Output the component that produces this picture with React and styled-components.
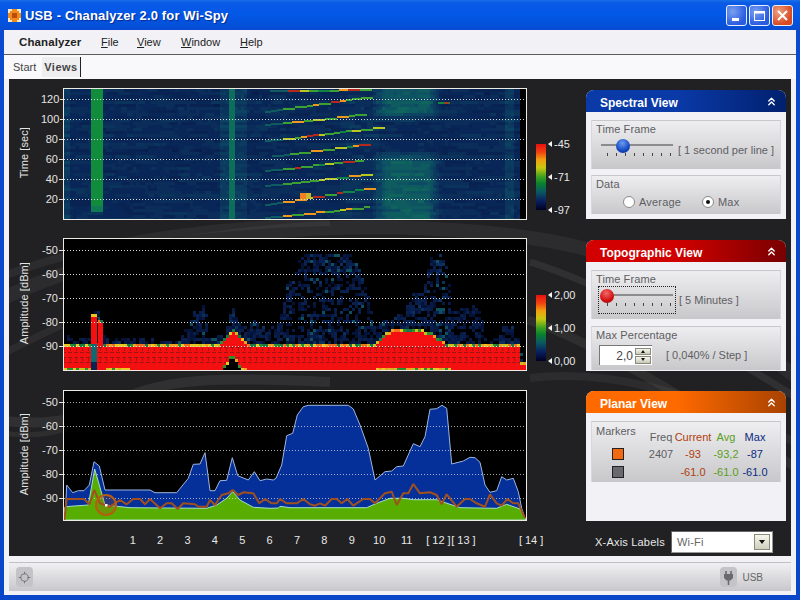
import React from 'react';
import styled, { createGlobalStyle } from 'styled-components';
import { ChevronsUp, Locate } from 'lucide-react';

const GlobalStyle = createGlobalStyle`
  html, body { margin: 0; padding: 0; width: 800px; height: 600px; overflow: hidden; background: #0a4ad0; }
  body { font-family: "Liberation Sans", Arial, sans-serif; font-size: 11px; }
  * { box-sizing: border-box; }
`;

// window frame
const Window = styled.div`
  width: 800px;
  height: 600px;
  display: flex;
  flex-direction: column;
  padding: 0 4px 5px;
  background: linear-gradient(180deg, #1a6fe8 0, #0a5ae6 3px, #0358e8 14px, #0450d8 26px, #0a4ad0 30px, #0a46c8 100%);
`;

const TitleBar = styled.div`
  height: 30px;
  flex: none;
  display: flex;
  align-items: center;
  padding: 0 3px 0 4px;
`;

const TitleText = styled.div`
  margin-left: 4px;
  color: #fff;
  font-size: 13px;
  font-weight: 700;
  letter-spacing: 0.15px;
  text-shadow: 1px 1px 1px #0a2a90;
  flex: 1;
`;

const CaptionButton = styled.div`
  width: 21px;
  height: 21px;
  margin-left: 2px;
  border: 1px solid #e8eefc;
  border-radius: 3px;
  display: flex;
  align-items: center;
  justify-content: center;
  background: ${(p) =>
    p.$close
      ? 'radial-gradient(circle at 30% 30%, #f0a080, #d84a22 70%)'
      : 'radial-gradient(circle at 30% 30%, #7aa0f0, #2a5ce0 70%)'};
`;

const Content = styled.div`
  flex: 1;
  display: flex;
  flex-direction: column;
  background: #f2f2f6;
`;

const MenuBar = styled.div`
  height: 25px;
  flex: none;
  display: flex;
  align-items: center;
  padding-left: 15px;
  border-bottom: 1px solid #5c5c5c;
  color: #222;
`;

const MenuBrand = styled.span`
  font-size: 11.5px;
  font-weight: 700;
  width: 82px;
  letter-spacing: 0.1px;
`;

const MenuItem = styled.span`
  font-size: 11px;
  width: ${(p) => p.$w}px;
`;

const TabBar = styled.div`
  height: 24px;
  flex: none;
  display: flex;
  align-items: center;
  padding-left: 7px;
  background: #f9f9fb;
  color: #444;
`;

const Tab = styled.div`
  height: 20px;
  display: flex;
  align-items: center;
  padding: 0 2px;
  font-size: 11px;
  font-weight: ${(p) => (p.$active ? 700 : 400)};
  letter-spacing: ${(p) => (p.$active ? '0.5px' : '0')};
  margin-left: ${(p) => (p.$active ? '4px' : '0')};
  background: ${(p) => (p.$active ? '#eeeef0' : 'transparent')};
  border-right: ${(p) => (p.$active ? '1px solid #222' : '0')};
`;

const Main = styled.div`
  position: relative;
  height: 477px;
  flex: none;
  margin: 0 5px;
  display: flex;
  overflow: hidden;
  background: #212123;
`;

const Swooshes = styled.svg`
  position: absolute;
  left: 0;
  top: 0;
`;

const ChartColumn = styled.div`
  position: relative;
  width: 577px;
  flex: none;
  padding-top: 9px;
  display: flex;
  flex-direction: column;
`;

const ChartRow = styled.div`
  display: flex;
  height: ${(p) => p.$h}px;
  margin-bottom: ${(p) => p.$gap}px;
  flex: none;
`;

const AxisTitle = styled.div`
  width: 32px;
  flex: none;
  display: flex;
  align-items: center;
  justify-content: flex-start;
  padding: 0 0 3px 9px;
  color: #e4e4e4;
  font-size: 11px;
  letter-spacing: 0.1px;
  span {
    writing-mode: vertical-rl;
    transform: rotate(180deg);
    white-space: nowrap;
    line-height: 13px;
  }
`;

const YAxis = styled.div`
  width: 22px;
  flex: none;
  display: flex;
  flex-direction: column;
  padding-top: ${(p) => p.$top}px;
`;

const YTick = styled.div`
  height: ${(p) => p.$h}px;
  display: flex;
  align-items: center;
  justify-content: flex-end;
  color: #e4e4e4;
  font-size: 11px;
  white-space: nowrap;
  &::after {
    content: '';
    width: 4px;
    height: 1px;
    margin-left: 1px;
    background: #e4e4e4;
  }
`;

const Plot = styled.div`
  width: 464px;
  flex: none;
  border: 1px solid #ecece4;
  background: #000;
  svg { display: block; }
`;

const Legend = styled.div`
  display: flex;
  margin: ${(p) => p.$top}px 0 0 9px;
  height: 66px;
`;

const LegendBar = styled.div`
  width: 10px;
  background: linear-gradient(180deg, #e81010 0, #f04010 12%, #f0a010 24%, #c8c810 36%, #3aa020 50%, #0a8030 60%, #0a5a60 72%, #0a2060 86%, #000020 100%);
`;

const LegendScale = styled.div`
  display: flex;
  flex-direction: column;
  justify-content: space-between;
  margin: -7px 0 -7px 2px;
`;

const LegendLabel = styled.div`
  height: 14px;
  display: flex;
  align-items: center;
  color: #e8e8e8;
  font-size: 11px;
  &::before {
    content: '';
    width: 0;
    height: 0;
    margin-right: 2px;
    border-style: solid;
    border-width: 3px 4px 3px 0;
    border-color: transparent #f4f4f4 transparent transparent;
  }
`;

const XAxis = styled.div`
  display: flex;
  align-items: center;
  height: 12px;
  margin-top: 13px;
  padding-left: 110px;
  color: #e8e8e8;
  font-size: 11px;
`;

const XTick = styled.span`
  width: ${(p) => p.$w}px;
  margin-left: ${(p) => p.$ml || 0}px;
  flex: none;
  text-align: center;
  white-space: nowrap;
`;

// right hand side
const SideColumn = styled.div`
  position: relative;
  width: 200px;
  flex: none;
  padding-top: 11px;
  display: flex;
  flex-direction: column;
`;

const Panel = styled.section`
  height: ${(p) => p.$h}px;
  margin-bottom: ${(p) => p.$gap}px;
  flex: none;
  background: #f2f2f6;
  border-radius: 8px 8px 0 0;
  display: flex;
  flex-direction: column;
`;

const PanelHeader = styled.header`
  height: 22px;
  flex: none;
  display: flex;
  align-items: center;
  justify-content: space-between;
  padding: 4px 8px 0 14px;
  border-radius: 8px 8px 0 0;
  color: #fff;
  font-size: 12px;
  font-weight: 700;
  background: linear-gradient(90deg, ${(p) => p.$from}, ${(p) => p.$from} 45%, ${(p) => p.$to});
  svg { margin-top: -4px; }
`;

const Group = styled.div`
  height: ${(p) => p.$h}px;
  margin: ${(p) => p.$top}px 5px 0;
  flex: none;
  border-top: 1px solid #c8c8ca;
  border-left: 1px solid #d8d8da;
  border-right: 1px solid #d8d8da;
  background: linear-gradient(180deg, #eeeef0, #c8c8cb);
  color: #5e5e62;
`;

const GroupLabel = styled.div`
  padding: 2px 0 0 4px;
  font-size: 11px;
  line-height: 13px;
  letter-spacing: 0.1px;
`;

const SliderRow = styled.div`
  display: flex;
  align-items: center;
  gap: ${(p) => p.$gap}px;
  margin: 3px 0 0 ${(p) => p.$left}px;
  font-size: 11px;
  white-space: nowrap;
`;

const Slider = styled.div`
  position: relative;
  width: 72px;
  height: 22px;
  flex: none;
  outline: ${(p) => (p.$focus ? '1px dotted #222' : '0')};
  outline-offset: ${(p) => (p.$focus ? '2px' : '0')};
  &::before {
    content: '';
    position: absolute;
    left: 0;
    right: 0;
    top: 5px;
    height: 2px;
    background: #8c8c8e;
  }
`;

const SliderTicks = styled.div`
  position: absolute;
  left: 6px;
  right: 2px;
  top: 14px;
  display: flex;
  justify-content: space-between;
  i {
    width: 1px;
    height: 3px;
    background: #444;
  }
`;

const SliderThumb = styled.div`
  position: absolute;
  left: ${(p) => p.$pos}px;
  top: 0;
  width: 14px;
  height: 14px;
  border-radius: 50%;
  background: radial-gradient(circle at 45% 30%, ${(p) => p.$light}, ${(p) => p.$color} 60%, ${(p) => p.$dark});
`;

const RadioRow = styled.div`
  display: flex;
  align-items: center;
  margin: 5px 0 0 31px;
  font-size: 11px;
  letter-spacing: 0.2px;
`;

const RadioDot = styled.span`
  position: relative;
  width: 12px;
  height: 12px;
  border-radius: 50%;
  border: 1px solid #8a8a8a;
  background: #fff;
  margin-right: 4px;
  flex: none;
  &::after {
    content: '';
    display: ${(p) => (p.$on ? 'block' : 'none')};
    position: absolute;
    left: 3px;
    top: 3px;
    width: 4px;
    height: 4px;
    border-radius: 50%;
    background: #111;
  }
`;

const RadioText = styled.span`
  width: ${(p) => p.$w}px;
`;

const SpinRow = styled.div`
  display: flex;
  align-items: center;
  margin: 3px 0 0 7px;
  font-size: 11px;
`;

const Spinner = styled.div`
  width: 53px;
  height: 20px;
  display: flex;
  align-items: center;
  justify-content: space-between;
  margin-right: 14px;
  padding: 1px;
  background: #fff;
  border-top: 1px solid #777;
  border-left: 1px solid #777;
  color: #444;
  font-size: 12px;
`;

const SpinValue = styled.span`
  flex: 1;
  text-align: right;
  padding-right: 2px;
`;

const SpinButtons = styled.div`
  display: flex;
  flex-direction: column;
  width: 16px;
  height: 16px;
  gap: 1px;
`;

const SpinButton = styled.div`
  flex: 1;
  display: flex;
  align-items: center;
  justify-content: center;
  background: linear-gradient(180deg, #f6f6ee, #c8c8b8);
  border: 1px solid #8a8a78;
  &::after {
    content: '';
    border-style: solid;
    border-width: ${(p) => (p.$up ? '0 2.5px 3px' : '3px 2.5px 0')};
    border-color: ${(p) =>
      p.$up
        ? 'transparent transparent #111 transparent'
        : '#111 transparent transparent transparent'};
  }
`;

const MarkerGrid = styled.div`
  display: grid;
  grid-template-columns: 57px 24px 40px 26px 32px;
  grid-auto-rows: 17.5px;
  padding-top: 6px;
  font-size: 11px;
  align-items: center;
  justify-items: center;
`;

const MarkerTitle = styled.div`
  justify-self: start;
  align-self: start;
  padding-left: 4px;
  margin-top: -3px;
  white-space: nowrap;
`;

const Cell = styled.div`
  color: ${(p) => p.$color || '#5e5e62'};
  white-space: nowrap;
`;

const Swatch = styled.div`
  width: 12px;
  height: 12px;
  margin-left: -6px;
  border: 1px solid #222;
  background: ${(p) => p.$color};
`;

const AxisPicker = styled.div`
  display: flex;
  align-items: center;
  height: 22px;
  padding-left: 9px;
  color: #e8e8e8;
  font-size: 11px;
  letter-spacing: 0.2px;
`;

const PickerLabel = styled.span`
  width: 76px;
`;

const Picker = styled.div`
  width: 102px;
  height: 22px;
  display: flex;
  align-items: center;
  justify-content: space-between;
  padding: 0 2px 0 5px;
  background: #fff;
  border: 1px solid #999;
  border-top-color: #666;
  border-left-color: #666;
  color: #666;
  font-size: 11px;
`;

const PickerArrow = styled.div`
  width: 16px;
  height: 16px;
  display: flex;
  align-items: center;
  justify-content: center;
  background: linear-gradient(180deg, #f6f6ea, #cfcfc0);
  border: 1px solid #8a8a78;
  &::after {
    content: '';
    border-style: solid;
    border-width: 4px 3.5px 0;
    border-color: #111 transparent transparent transparent;
  }
`;

const StatusBar = styled.div`
  height: 29px;
  flex: none;
  margin: 6px 5px 0;
  display: flex;
  align-items: center;
  justify-content: space-between;
  padding: 0 28px 0 7px;
  border-top: 1px solid #c0c0c2;
  background: linear-gradient(180deg, #f0f0f2, #c8c8cc);
  color: #666;
  font-size: 10px;
`;

const StatusIcon = styled.div`
  width: 17px;
  height: 20px;
  display: flex;
  align-items: center;
  justify-content: center;
  border-radius: 4px;
  background: #c4c4c8;
  color: #666;
`;

const StatusRight = styled.div`
  display: flex;
  align-items: center;
  gap: 5px;
`;

// helpers for the drawn data
const rng = (seed) => () => {
  seed = (seed + 0x6d2b79f5) | 0;
  let t = Math.imul(seed ^ (seed >>> 15), 1 | seed);
  t = (t + Math.imul(t ^ (t >>> 7), 61 | t)) ^ t;
  return ((t ^ (t >>> 14)) >>> 0) / 4294967296;
};

const interp = (pts, x) => {
  if (x <= pts[0][0]) return pts[0][1];
  for (let i = 1; i < pts.length; i++) {
    if (x <= pts[i][0]) {
      const [x0, y0] = pts[i - 1];
      const [x1, y1] = pts[i];
      return y0 + ((y1 - y0) * (x - x0)) / (x1 - x0 || 1);
    }
  }
  return pts[pts.length - 1][1];
};

const STOPS = [
  [0, [0, 0, 30]],
  [0.2, [9, 38, 88]],
  [0.3, [13, 74, 100]],
  [0.4, [16, 118, 90]],
  [0.5, [16, 140, 60]],
  [0.62, [150, 200, 30]],
  [0.72, [232, 200, 30]],
  [0.84, [240, 128, 30]],
  [1, [180, 40, 30]],
];

const heat = (t) => {
  const v = Math.max(0, Math.min(1, Math.round(t * 50) / 50));
  for (let i = 1; i < STOPS.length; i++) {
    if (v <= STOPS[i][0]) {
      const [a, ca] = STOPS[i - 1];
      const [b, cb] = STOPS[i];
      const k = (v - a) / (b - a);
      return `rgb(${ca.map((c, n) => Math.round(c + (cb[n] - c) * k)).join(',')})`;
    }
  }
  return 'rgb(180,40,30)';
};

const SWEEPS = [
  [283, 215, 367, 206],
  [283, 201, 367, 187],
  [283, 183, 367, 173],
  [283, 168, 360, 159],
  [290, 153, 367, 143],
  [283, 138, 375, 127],
  [283, 122, 367, 113],
  [283, 108, 367, 96],
  [288, 90, 372, 89],
];

const buildSpectrogram = () => {
  const r = rng(11);
  const rects = [];
  for (let j = 0; j < 44; j++) {
    const y = 89 + j * 3;
    const bias = (r() - 0.5) * 0.025;
    let run = null;
    let wobble = r() * 0.05;
    for (let i = 0; i < 154; i++) {
      const x = 64 + i * 3;
      if (r() < 0.35) wobble = r() * 0.05;
      let t = 0.18 + bias + wobble;
      if (x < 70) t += 0.05;
      if (x >= 91 && x < 101) t = y < 205 ? 0.49 + r() * 0.02 : y < 211 ? 0.41 : t;
      if (x >= 218 && x < 245) t += 0.05;
      if (x >= 229 && x < 235) t = 0.37 + r() * 0.02;
      if (x >= 340 && x < 377) t += 0.02;
      if (x >= 370 && x < 440 && (y < 120 || y > 148)) {
        const fx = Math.min((x - 370) / 14, (440 - x) / 14, 1);
        const fy = y < 120 ? Math.min((120 - y) / 9, 1) : Math.min((y - 148) / 12, 1);
        t += 0.13 * fx * fy;
      }
      if (x >= 505 && x < 512) t += 0.05;
      const c = x >= 520 ? '#000' : heat(t);
      if (run && run.c === c) run.w += 3;
      else {
        run = { x, y, w: 3, h: 3, c };
        rects.push(run);
      }
    }
  }
  SWEEPS.forEach(([x0, y0, x1, y1]) => {
    const slope = (y1 - y0) / (x1 - x0);
    // dim tail in front of every sweep
    for (let x = x0 - 18; x < x0; x += 6) {
      rects.push({ x, y: Math.round(y0 + slope * (x - x0)), w: 6, h: 2, c: heat(0.34) });
    }
    for (let x = x0; x < x1; ) {
      const w = 6 + Math.floor(r() * 3) * 3;
      const y = Math.round(y0 + slope * (x - x0));
      const pick = r();
      const t = pick < 0.4 ? 0.54 : pick < 0.6 ? 0.66 : pick < 0.78 ? 0.8 : pick < 0.88 ? 1 : 0.46;
      rects.push({ x, y, w, h: 2, c: heat(t) });
      x += w;
    }
  });
  rects.push({ x: 300, y: 193, w: 6, h: 6, c: '#f08020' });
  rects.push({ x: 306, y: 193, w: 5, h: 6, c: '#c8b830' });
  rects.push({ x: 438, y: 102, w: 12, h: 2, c: '#0f8a3c' });
  rects.push({ x: 444, y: 102, w: 5, h: 2, c: '#a04020' });
  return rects;
};

const z8 = (pts) => pts.map(([x, y]) => [10 + x / 3, 385 + y / 3]);
const z9 = (pts) => pts.map(([x, y]) => [270 + x / 3, 385 + y / 3]);

const MAX_CURVE = [
  [63.5, 520],
  ...z8([[165, 405], [170, 300], [178, 310], [188, 323], [205, 317], [222, 317], [238, 300], [252, 230], [268, 243], [285, 315], [420, 315], [435, 323], [500, 323], [535, 280], [550, 238], [570, 237], [585, 203], [600, 317], [615, 317], [630, 287], [650, 286], [667, 218], [683, 272], [715, 285], [733, 260], [750, 287], [770, 282], [790, 285]]),
  ...z9([[18, 280], [35, 240], [50, 152], [68, 145], [82, 90], [100, 65], [115, 61], [235, 61], [250, 72], [270, 120], [295, 190], [315, 285], [345, 260], [365, 258], [380, 245], [400, 243], [430, 176], [450, 185], [465, 155], [480, 73], [500, 71], [516, 61], [530, 70], [545, 237], [580, 228], [600, 217], [615, 218], [630, 232], [645, 300], [660, 322], [680, 317], [695, 275], [710, 285], [730, 280], [745, 320], [755, 370], [767, 405]]),
];

const AVG_CURVE = [
  [63.5, 520],
  ...z8([[165, 365], [235, 360], [254, 252], [285, 360], [360, 368], [590, 370], [620, 360], [650, 340], [668, 320], [690, 345], [730, 367], [780, 370], [805, 369]]),
  ...z9([[30, 364], [60, 368], [290, 368], [320, 355], [360, 340], [400, 340], [430, 344], [500, 344], [540, 358], [570, 368], [680, 370], [710, 358], [750, 372], [767, 405]]),
];

const CUR_CURVE = [
  ...z8([[163, 405], [170, 342], [222, 342], [238, 358], [253, 315], [270, 355], [300, 365], [330, 345], [350, 358], [370, 342], [390, 342], [405, 358], [420, 342], [450, 370], [470, 355], [485, 355], [503, 372], [520, 355], [555, 358], [565, 365], [590, 365], [600, 345], [615, 360], [635, 330], [655, 325], [668, 315], [685, 330], [700, 322], [730, 325], [748, 355], [765, 342], [785, 355], [800, 355]]),
  ...z9([[30, 342], [50, 355], [80, 355], [100, 342], [120, 358], [135, 362], [150, 355], [165, 362], [185, 342], [200, 342], [215, 355], [232, 342], [250, 362], [280, 342], [300, 342], [315, 355], [345, 325], [365, 320], [380, 360], [400, 325], [415, 325], [430, 297], [450, 325], [480, 322], [500, 330], [515, 358], [530, 328], [560, 365], [585, 342], [600, 342], [620, 355], [645, 365], [660, 328], [680, 355], [695, 362], [712, 342], [730, 355], [745, 355], [765, 400]]),
];

const RED_TOP = [[64, 344], [218, 344], [224, 338], [232, 328], [240, 333], [248, 342], [252, 344], [373, 344], [378, 338], [385, 330], [395, 328], [420, 328], [430, 331], [440, 338], [450, 344], [520, 344]];
const TOP_COLORS = ['#e8c820', '#f0a020', '#2a9030', '#c8c020', '#f07020', '#1a7a40'];
const NOISE = ['#051237', '#071945', '#09204e', '#0b305c', '#0e5060'];
const WARM_BOTTOM = [[64, 91], [106, 130], [222, 245], [375, 450]];

const buildDensity = () => {
  const r = rng(23);
  const rects = [];
  for (let i = 0; i < 154; i++) {
    const x = 64 + i * 3;
    const maxY = interp(MAX_CURVE, x + 1) - 152;
    let top = interp(RED_TOP, x + 1);
    let bottom = 369;
    if (x === 91 || x === 94) {
      top = 313;
      bottom = 343;
    }
    if (x === 97 || x === 100) top = 318;
    if (x >= 520) top = 361;
    const notch = 352 + Math.abs(x + 1 - 232) * 1.6;
    const warm = WARM_BOTTOM.some(([a, b]) => x >= a && x < b);
    for (let y = 239; y < 369; y += 3) {
      if (y < top) {
        if (y < maxY - 2) continue;
        const nearEdge = y - maxY < 18;
        const nearRed = top - y < 14;
        const p = nearEdge || nearRed ? 0.68 : 0.4;
        if (r() > p) continue;
        const tower = x >= 436 && x <= 444;
        let n = Math.floor(r() * 3);
        if (r() < (tower ? 0.5 : 0.08)) n = 3 + Math.floor(r() * 2);
        rects.push({ x, y, w: 3, h: 3, c: NOISE[n] });
      } else if (y >= bottom) {
        rects.push({ x, y, w: 3, h: 3, c: y < 360 ? '#0e6a70' : '#0a2452' });
      } else if (y < notch) {
        let c = '#f41010';
        if (y < top + 3) c = TOP_COLORS[Math.floor(r() * TOP_COLORS.length)];
        if (y >= 366 && warm) c = TOP_COLORS[Math.floor(r() * 4)];
        rects.push({ x, y, w: 3, h: 3, c });
      } else if (y < notch + 3) {
        rects.push({ x, y, w: 3, h: 3, c: TOP_COLORS[Math.floor(r() * 3)] });
      } else {
        rects.push({ x, y, w: 3, h: 3, c: '#000' });
      }
    }
    // the dark cell lines inside the red area
    if (bottom === 369 && x < 520) {
      for (let y = 347; y < 366; y += 5) {
        if (y > top + 3 && y < notch) rects.push({ x: x + (i % 2), y, w: 2, h: 1, c: '#9c1414' });
      }
      if (i % 2 === 0) {
        for (let y = 348; y < 366; y += 10) {
          if (y > top + 3 && y < notch) rects.push({ x, y, w: 1, h: 3, c: '#a81414' });
        }
      }
    }
  }
  rects.push({ x: 97, y: 318, w: 1, h: 25, c: '#1a0505' });
  return rects;
};

const toPoints = (pts) => pts.map(([x, y]) => `${x.toFixed(1)},${y.toFixed(1)}`).join(' ');

const Cells = ({ rects }) =>
  rects.map((d, i) => <rect key={i} x={d.x} y={d.y} width={d.w} height={d.h} fill={d.c} />);

const GridLines = ({ ys, x1 = 64, x2 = 526, opacity = 1 }) =>
  ys.map((y) => (
    <line key={y} x1={x1} x2={x2} y1={y + 0.5} y2={y + 0.5} stroke="#dcdcdc" strokeDasharray="1 2" opacity={opacity} />
  ));

const spectrogram = buildSpectrogram();
const density = buildDensity();

const Spectrogram = () => (
  <svg width="462" height="130" viewBox="64 89 462 130" shapeRendering="crispEdges">
    <Cells rects={spectrogram} />
    <GridLines ys={[99, 119, 139, 159, 179, 199]} />
  </svg>
);

const Topographic = () => (
  <svg width="462" height="131" viewBox="64 239 462 131" shapeRendering="crispEdges">
    <Cells rects={density} />
    <GridLines ys={[250, 274, 298, 322, 346]} />
  </svg>
);

const Planar = () => (
  <svg width="462" height="129" viewBox="64 391 462 129">
    <polygon points={toPoints(MAX_CURVE)} fill="#05309a" stroke="#9db6e0" />
    <polygon points={toPoints(AVG_CURVE)} fill="#58ae00" stroke="#a8dcc8" />
    <g shapeRendering="crispEdges">
      <GridLines ys={[402, 426, 450, 474, 498]} opacity={0.75} />
    </g>
    <polyline points={toPoints(CUR_CURVE)} fill="none" stroke="#a0501e" strokeWidth="2" strokeLinejoin="bevel" />
    <circle cx="106" cy="505" r="10" fill="#a0501e" fillOpacity="0.25" stroke="#b85c12" strokeWidth="2" />
    <rect x="105" y="504" width="2.5" height="2.5" fill="#fff" />
  </svg>
);

const TitleIcon = () => (
  <svg width="13" height="13" viewBox="0 0 13 13">
    <rect width="13" height="13" rx="1.5" fill="#f08a1c" />
    <path d="M0 0h4v2H2v2H0zM9 0h4v4h-2V2H9zM0 9h2v2h2v2H0zM11 9h2v4H9v-2h2z" fill="#fbe9c8" />
    <rect x="4" y="4" width="5" height="5" fill="#b84c08" />
  </svg>
);

const PlugIcon = () => (
  <svg width="11" height="15" viewBox="0 0 11 15">
    <path d="M3 1v3M8 1v3" stroke="#6a6a6e" strokeWidth="1.6" fill="none" />
    <path d="M1 4h9v4l-2.5 2.5h-4L1 8z" fill="#6a6a6e" />
    <path d="M5.5 10v5" stroke="#6a6a6e" strokeWidth="1.6" />
  </svg>
);

const Background = () => (
  <Swooshes width="782" height="477" viewBox="9 79 782 477" fill="none">
    <path d="M-20 310C100 245 290 215 480 232S690 300 820 395" stroke="#fff" strokeOpacity="0.05" strokeWidth="14" />
    <path d="M-20 285C90 240 200 225 330 222" stroke="#fff" strokeOpacity="0.05" strokeWidth="8" />
    <path d="M530 262C590 280 690 330 800 400" stroke="#fff" strokeOpacity="0.07" strokeWidth="7" />
    <path d="M528 320C590 340 690 400 800 470" stroke="#fff" strokeOpacity="0.06" strokeWidth="9" />
    <path d="M-10 420C40 425 70 425 120 400S240 378 330 382" stroke="#fff" strokeOpacity="0.07" strokeWidth="10" />
    <path d="M-10 432C20 436 40 436 62 430" stroke="#fff" strokeOpacity="0.06" strokeWidth="5" />
    <path d="M530 378C600 370 680 385 800 445" stroke="#fff" strokeOpacity="0.05" strokeWidth="8" />
    <path d="M-10 360C20 345 40 335 62 325" stroke="#fff" strokeOpacity="0.05" strokeWidth="7" />
  </Swooshes>
);

const Ticks = () => (
  <SliderTicks>
    {Array.from({ length: 8 }, (_, i) => (
      <i key={i} />
    ))}
  </SliderTicks>
);

const Y_TIME = ['120', '100', '80', '60', '40', '20'];
const Y_DBM = ['-50', '-60', '-70', '-80', '-90'];
const X_TICKS = ['1', '2', '3', '4', '5', '6', '7', '8', '9', '10', '11'];

const App = () => {
  return (
    <>
      <GlobalStyle />
      <Window>
        <TitleBar>
          <TitleIcon />
          <TitleText>USB - Chanalyzer 2.0 for Wi-Spy</TitleText>
          <CaptionButton>
            <svg width="13" height="13" viewBox="0 0 13 13"><rect x="2" y="9" width="7" height="3" fill="#fff" /></svg>
          </CaptionButton>
          <CaptionButton>
            <svg width="13" height="13" viewBox="0 0 13 13"><rect x="1.5" y="2.5" width="10" height="9" fill="none" stroke="#fff" /><rect x="1" y="2" width="11" height="2.5" fill="#fff" /></svg>
          </CaptionButton>
          <CaptionButton $close>
            <svg width="13" height="13" viewBox="0 0 13 13"><path d="M2 2l9 9M11 2l-9 9" stroke="#fff" strokeWidth="2" /></svg>
          </CaptionButton>
        </TitleBar>

        <Content>
          <MenuBar>
            <MenuBrand>Chanalyzer</MenuBrand>
            <MenuItem $w={36}><u>F</u>ile</MenuItem>
            <MenuItem $w={44}><u>V</u>iew</MenuItem>
            <MenuItem $w={59}><u>W</u>indow</MenuItem>
            <MenuItem $w={30}><u>H</u>elp</MenuItem>
          </MenuBar>
          <TabBar>
            <Tab>Start</Tab>
            <Tab $active>Views</Tab>
          </TabBar>

          <Main>
            <Background />
            <ChartColumn>
              <ChartRow $h={132} $gap={18}>
                <AxisTitle><span>Time [sec]</span></AxisTitle>
                <YAxis $top={1}>
                  {Y_TIME.map((t) => <YTick key={t} $h={20}>{t}</YTick>)}
                </YAxis>
                <Plot><Spectrogram /></Plot>
                <Legend $top={56}>
                  <LegendBar />
                  <LegendScale>
                    <LegendLabel>-45</LegendLabel>
                    <LegendLabel>-71</LegendLabel>
                    <LegendLabel>-97</LegendLabel>
                  </LegendScale>
                </Legend>
              </ChartRow>
              <ChartRow $h={133} $gap={19}>
                <AxisTitle><span>Amplitude [dBm]</span></AxisTitle>
                <YAxis $top={0}>
                  {Y_DBM.map((t) => <YTick key={t} $h={24}>{t}</YTick>)}
                </YAxis>
                <Plot><Topographic /></Plot>
                <Legend $top={57}>
                  <LegendBar />
                  <LegendScale>
                    <LegendLabel>2,00</LegendLabel>
                    <LegendLabel>1,00</LegendLabel>
                    <LegendLabel>0,00</LegendLabel>
                  </LegendScale>
                </Legend>
              </ChartRow>
              <ChartRow $h={131} $gap={0}>
                <AxisTitle><span>Amplitude [dBm]</span></AxisTitle>
                <YAxis $top={0}>
                  {Y_DBM.map((t) => <YTick key={t} $h={24}>{t}</YTick>)}
                </YAxis>
                <Plot><Planar /></Plot>
              </ChartRow>
              <XAxis>
                {X_TICKS.map((t) => <XTick key={t} $w={27.4}>{t}</XTick>)}
                <XTick $w={25} $ml={5.6}>[ 12 ]</XTick>
                <XTick $w={25}>[ 13 ]</XTick>
                <XTick $w={24} $ml={43}>[ 14 ]</XTick>
              </XAxis>
            </ChartColumn>

            <SideColumn>
              <Panel $h={129} $gap={21}>
                <PanelHeader $from="#0a3aa8" $to="#01206e">
                  Spectral View
                  <ChevronsUp size={13} strokeWidth={2.5} />
                </PanelHeader>
                <Group $h={49} $top={8}>
                  <GroupLabel>Time Frame</GroupLabel>
                  <SliderRow $left={9} $gap={5}>
                    <Slider>
                      <Ticks />
                      <SliderThumb $pos={15} $light="#6a9cf0" $color="#1448c0" $dark="#0a2a80" />
                    </Slider>
                    [ 1 second per line ]
                  </SliderRow>
                </Group>
                <Group $h={39} $top={6}>
                  <GroupLabel>Data</GroupLabel>
                  <RadioRow>
                    <RadioDot />
                    <RadioText $w={63}>Average</RadioText>
                    <RadioDot $on />
                    <RadioText $w={24}>Max</RadioText>
                  </RadioRow>
                </Group>
              </Panel>

              <Panel $h={131} $gap={20}>
                <PanelHeader $from="#d20000" $to="#780000">
                  Topographic View
                  <ChevronsUp size={13} strokeWidth={2.5} />
                </PanelHeader>
                <Group $h={49} $top={8}>
                  <GroupLabel>Time Frame</GroupLabel>
                  <SliderRow $left={9} $gap={6}>
                    <Slider $focus>
                      <Ticks />
                      <SliderThumb $pos={-1} $light="#f06a6a" $color="#d41010" $dark="#8a0808" />
                    </Slider>
                    [ 5 Minutes ]
                  </SliderRow>
                </Group>
                <Group $h={44} $top={7}>
                  <GroupLabel>Max Percentage</GroupLabel>
                  <SpinRow>
                    <Spinner>
                      <SpinValue>2,0</SpinValue>
                      <SpinButtons>
                        <SpinButton $up />
                        <SpinButton />
                      </SpinButtons>
                    </Spinner>
                    [ 0,040% / Step ]
                  </SpinRow>
                </Group>
              </Panel>

              <Panel $h={130} $gap={10}>
                <PanelHeader $from="#ff6a00" $to="#a84200">
                  Planar View
                  <ChevronsUp size={13} strokeWidth={2.5} />
                </PanelHeader>
                <Group $h={61} $top={8}>
                  <MarkerGrid>
                    <MarkerTitle>Markers</MarkerTitle>
                    <Cell>Freq</Cell>
                    <Cell $color="#b0400a">Current</Cell>
                    <Cell $color="#5a9e1a">Avg</Cell>
                    <Cell $color="#0a2a80">Max</Cell>

                    <Swatch $color="#f26a10" />
                    <Cell>2407</Cell>
                    <Cell $color="#b0400a">-93</Cell>
                    <Cell $color="#5a9e1a">-93,2</Cell>
                    <Cell $color="#0a2a80">-87</Cell>

                    <Swatch $color="#6a6a6e" />
                    <Cell />
                    <Cell $color="#b0400a">-61.0</Cell>
                    <Cell $color="#5a9e1a">-61.0</Cell>
                    <Cell $color="#0a2a80">-61.0</Cell>
                  </MarkerGrid>
                </Group>
              </Panel>

              <AxisPicker>
                <PickerLabel>X-Axis Labels</PickerLabel>
                <Picker>
                  Wi-Fi
                  <PickerArrow />
                </Picker>
              </AxisPicker>
            </SideColumn>
          </Main>

          <StatusBar>
            <StatusIcon><Locate size={13} strokeWidth={1.4} /></StatusIcon>
            <StatusRight>
              <StatusIcon><PlugIcon /></StatusIcon>
              USB
            </StatusRight>
          </StatusBar>
        </Content>
      </Window>
    </>
  );
};

export default App;
